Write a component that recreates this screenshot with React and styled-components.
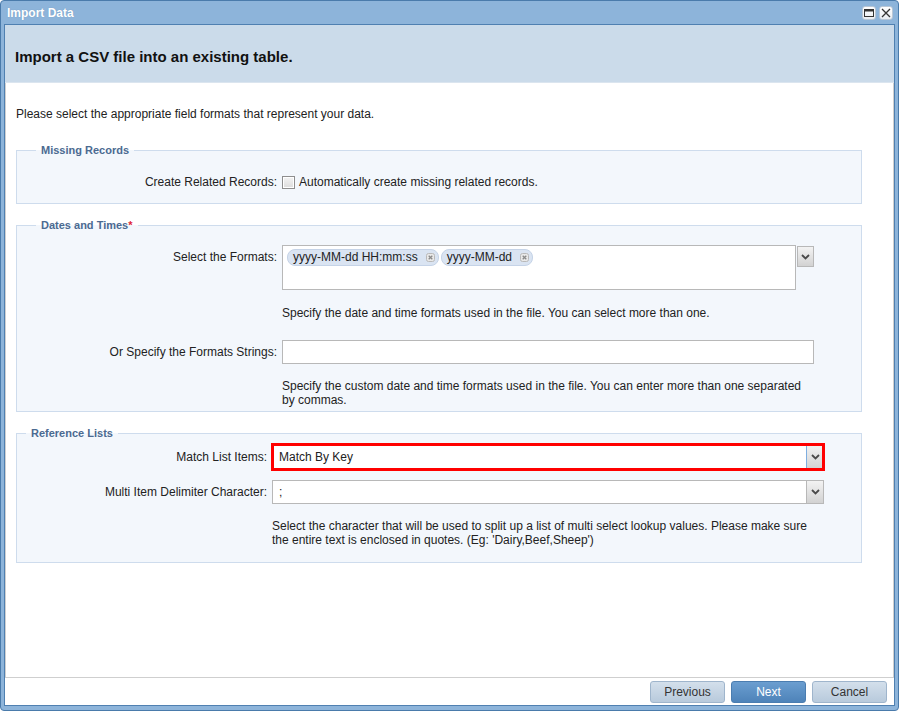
import React from "react";
import styled, { createGlobalStyle, css } from "styled-components";

const GlobalStyle = createGlobalStyle`
  html, body {
    margin: 0;
    padding: 0;
    background: #ffffff;
  }
  body {
    font-family: "Liberation Sans", Arial, sans-serif;
    font-size: 12px;
    color: #222;
  }
`;

function Chevron() {
  return (
    <svg width="9" height="6" viewBox="0 0 9 6">
      <polyline
        points="1,1 4.5,4.5 8,1"
        fill="none"
        stroke="#4a4a4a"
        strokeWidth="1.8"
      />
    </svg>
  );
}

function ChipClose() {
  return (
    <svg width="9" height="9" viewBox="0 0 9 9">
      <rect x="0.5" y="0.5" width="8" height="8" rx="2" fill="#e9e9e9" stroke="#b9b9b9" />
      <path d="M2.7 2.7 L6.3 6.3 M6.3 2.7 L2.7 6.3" stroke="#8a8a8a" strokeWidth="1.3" />
    </svg>
  );
}

function App() {
  return (
    <>
      <GlobalStyle />
      <Window>
        <TitleBar>
          <WindowTitle>Import Data</WindowTitle>
          <Tools>
            <Tool>
              <svg width="10" height="8" viewBox="0 0 10 8">
                <rect x="0.5" y="0.5" width="9" height="7" fill="none" stroke="#333" />
                <rect x="0.5" y="0.5" width="9" height="2" fill="#333" />
              </svg>
            </Tool>
            <Tool>
              <svg width="10" height="10" viewBox="0 0 10 10">
                <path d="M1 1 L9 9 M9 1 L1 9" stroke="#333" strokeWidth="1.3" />
              </svg>
            </Tool>
          </Tools>
        </TitleBar>

        <Inner>
          <Header>Import a CSV file into an existing table.</Header>

          <Body>
            <Intro>
              Please select the appropriate field formats that represent your data.
            </Intro>

            <Group $pad="13px 47px 9px 19px">
              <Legend>Missing Records</Legend>
              <Row>
                <Label>Create Related Records:</Label>
                <CheckRow>
                  <Checkbox />
                  <span>Automatically create missing related records.</span>
                </CheckRow>
              </Row>
            </Group>

            <Group $pad="13px 47px 4px 19px">
              <Legend>
                Dates and Times<Required>*</Required>
              </Legend>
              <Row>
                <Label>Select the Formats:</Label>
                <MultiWrap>
                  <MultiBox>
                    <Chip>
                      yyyy-MM-dd HH:mm:ss
                      <ChipClose />
                    </Chip>
                    <Chip>
                      yyyy-MM-dd
                      <ChipClose />
                    </Chip>
                  </MultiBox>
                  <OuterTrigger>
                    <Chevron />
                  </OuterTrigger>
                </MultiWrap>
                <Help $top={16}>
                  Specify the date and time formats used in the file. You can select more than one.
                </Help>
              </Row>
              <Row $top={20}>
                <Label>Or Specify the Formats Strings:</Label>
                <TextInput />
                <Help>
                  Specify the custom date and time formats used in the file. You can enter more
                  than one separated by commas.
                </Help>
              </Row>
            </Group>

            <Group $pad="4px 37px 15px 9px">
              <Legend>Reference Lists</Legend>
              <Row>
                <Label $tall>Match List Items:</Label>
                <Select $highlight>
                  <Value>Match By Key</Value>
                  <Trigger $focused>
                    <Chevron />
                  </Trigger>
                </Select>
              </Row>
              <Row $top={10}>
                <Label>Multi Item Delimiter Character:</Label>
                <Select>
                  <Value>;</Value>
                  <Trigger>
                    <Chevron />
                  </Trigger>
                </Select>
                <Help>
                  Select the character that will be used to split up a list of multi select
                  lookup values. Please make sure the entire text is enclosed in quotes. (Eg:
                  'Dairy,Beef,Sheep')
                </Help>
              </Row>
            </Group>
          </Body>

          <Footer>
            <Button>Previous</Button>
            <Button $primary>Next</Button>
            <Button>Cancel</Button>
          </Footer>
        </Inner>
      </Window>
    </>
  );
}

export default App;

const Window = styled.div`
  width: 899px;
  height: 711px;
  box-sizing: border-box;
  border: 1px solid #4a7bab;
  border-radius: 4px;
  background: #8db4da;
  padding: 0 3px 4px 3px;
  display: flex;
  flex-direction: column;
`;

const TitleBar = styled.div`
  height: 23px;
  display: flex;
  align-items: center;
  justify-content: space-between;
  padding: 0 2px 0 3px;
`;

const WindowTitle = styled.div`
  font-weight: bold;
  font-size: 12px;
  color: #ffffff;
  text-shadow: 0 0 1px #6d93ba;
`;

const Tools = styled.div`
  display: flex;
  gap: 3px;
`;

const Tool = styled.div`
  width: 14px;
  height: 14px;
  box-sizing: border-box;
  border: 1px solid #b9c7d6;
  border-radius: 3px;
  background: linear-gradient(#ffffff, #e9edf2);
  display: flex;
  align-items: center;
  justify-content: center;
`;

const Inner = styled.div`
  flex: 1;
  display: flex;
  flex-direction: column;
  background: #ffffff;
  border: 1px solid #4f80b1;
`;

const Header = styled.div`
  height: 58px;
  box-sizing: border-box;
  padding: 6px 0 0 10px;
  display: flex;
  align-items: center;
  background: #cbdbea;
  border-bottom: 1px solid #dbe5ef;
  font-weight: bold;
  font-size: 15px;
  color: #111;
`;

const Body = styled.div`
  flex: 1;
  border: 1px solid #cfcfcf;
  border-top: none;
  padding: 24px 31px 0 10px;
`;

const Intro = styled.div`
  line-height: 15px;
  margin-bottom: 21px;
`;

const Group = styled.fieldset`
  margin: 0 0 14px 0;
  padding: ${(p) => p.$pad};
  border: 1px solid #cedced;
  background: #f3f7fc;
`;

const Legend = styled.legend`
  padding: 0 5px;
  font-size: 11px;
  line-height: 14px;
  font-weight: bold;
  color: #4b6a91;
`;

const Required = styled.span`
  color: #e0263a;
`;

const Row = styled.div`
  display: grid;
  grid-template-columns: 241px 1fr;
  column-gap: 5px;
  margin-top: ${(p) => p.$top || 0}px;
`;

const Label = styled.div`
  text-align: right;
  line-height: ${(p) => (p.$tall ? 26 : 24)}px;
  white-space: nowrap;
`;

const CheckRow = styled.div`
  display: flex;
  align-items: center;
  gap: 4px;
  height: 24px;
`;

const Checkbox = styled.span`
  width: 13px;
  height: 13px;
  box-sizing: border-box;
  border: 1px solid #8e8e8e;
  background: linear-gradient(#f4f4f4, #dcdcdc);
  box-shadow: inset 0 0 0 1px #ffffff;
`;

const MultiWrap = styled.div`
  display: flex;
  align-items: flex-start;
  gap: 1px;
`;

const MultiBox = styled.div`
  flex: 1;
  height: 45px;
  box-sizing: border-box;
  border: 1px solid #b8b8b8;
  background: #ffffff;
  padding: 3px 4px;
  display: flex;
  align-items: flex-start;
  gap: 2px;
`;

const Chip = styled.div`
  display: flex;
  align-items: center;
  gap: 8px;
  height: 17px;
  box-sizing: border-box;
  padding: 0 3px 0 5px;
  border: 1px solid #c5d3e7;
  border-radius: 8px;
  background: #dae4f2;
  color: #222;
  line-height: 15px;
`;

const triggerLook = css`
  width: 17px;
  box-sizing: border-box;
  background: linear-gradient(#f3f3f3, #d2d2d2);
  display: flex;
  align-items: center;
  justify-content: center;
`;

const OuterTrigger = styled.div`
  ${triggerLook};
  height: 21px;
  margin-top: 1px;
  border: 1px solid #b8b8b8;
`;

const TextInput = styled.div`
  height: 24px;
  box-sizing: border-box;
  border: 1px solid #b8b8b8;
  background: #ffffff;
`;

const Select = styled.div`
  height: 24px;
  box-sizing: border-box;
  border: 1px solid #b8b8b8;
  background: #ffffff;
  display: flex;
  ${(p) =>
    p.$highlight &&
    css`
      height: 26px;
      outline: 3px solid #ff0000;
      outline-offset: -2px;
    `}
`;

const Value = styled.div`
  flex: 1;
  padding-left: 6px;
  display: flex;
  align-items: center;
`;

const Trigger = styled.div`
  ${triggerLook};
  border-left: 1px solid ${(p) => (p.$focused ? "#7eaee0" : "#b8b8b8")};
`;

const Help = styled.div`
  grid-column: 2;
  margin-top: ${(p) => p.$top || 15}px;
  line-height: 14px;
  color: #222;
`;

const Footer = styled.div`
  height: 27px;
  box-sizing: border-box;
  padding: 3px 7px 0 0;
  display: flex;
  justify-content: flex-end;
  align-items: flex-start;
  gap: 6px;
`;

const Button = styled.div`
  width: 75px;
  height: 22px;
  box-sizing: border-box;
  border-radius: 3px;
  display: flex;
  align-items: center;
  justify-content: center;
  font-size: 12px;
  border: 1px solid #9fb5cc;
  background: linear-gradient(#d3dfeb, #b8cadc);
  color: #333;
  ${(p) =>
    p.$primary &&
    css`
      border-color: #4b7db0;
      background: linear-gradient(#6b9ed0, #4e83b9);
      color: #ffffff;
    `}
`;
